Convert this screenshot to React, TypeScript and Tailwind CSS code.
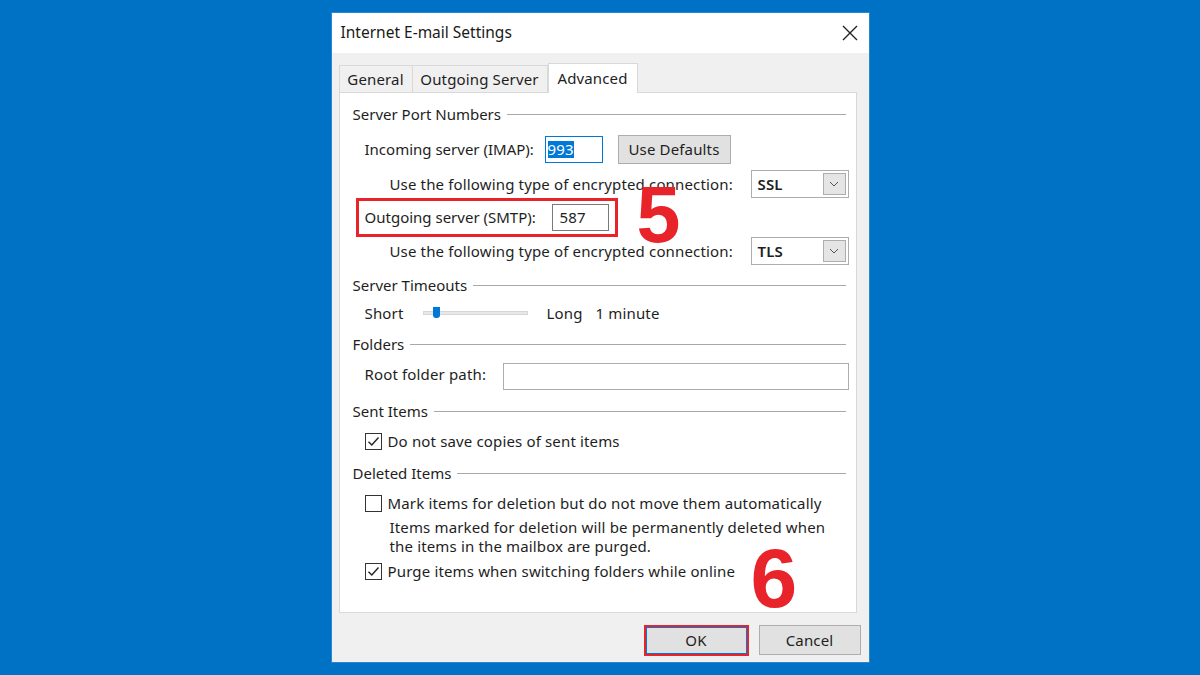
import React from "react";

const font = { fontFamily: '"Noto Sans", "Open Sans", sans-serif' };
const bigFont = { fontFamily: '"Liberation Sans", Arial, sans-serif' };

function GroupHeader({ title, mt }: { title: string; mt: string }) {
  return (
    <div className={`flex h-[20px] items-center gap-[6px] pl-[13px] pr-[10px] tracking-normal ${mt}`}>
      <span className="whitespace-nowrap">{title}</span>
      <div className="h-px flex-1 bg-[#a8a8a8]" />
    </div>
  );
}

function Checkbox({ checked }: { checked: boolean }) {
  return (
    <div className="flex h-[17px] w-[17px] shrink-0 items-center justify-center border border-[#333] bg-white">
      {checked && (
        <svg width="13" height="13" viewBox="0 0 13 13" fill="none">
          <path d="M1.5 6.8 L4.8 10 L11.5 2.5" stroke="#222" strokeWidth="1.4" />
        </svg>
      )}
    </div>
  );
}

function Select({ value }: { value: string }) {
  return (
    <div className="flex h-[28px] w-[98px] items-center justify-between border border-[#adadad] bg-white pl-[6px] pr-[2px]">
      <span className="font-semibold">{value}</span>
      <div className="flex h-[22px] w-[23px] items-center justify-center border border-[#adadad] bg-[#e5e5e5]">
        <svg width="10" height="6" viewBox="0 0 10 6" fill="none">
          <path d="M1 1 L5 5 L9 1" stroke="#555" strokeWidth="1" />
        </svg>
      </div>
    </div>
  );
}

export default function App() {
  return (
    <div className="flex h-[675px] w-[1200px] justify-center bg-[#0072c6] pt-[12px]" style={font}>
      <div className="relative flex h-[651px] w-[539px] flex-col border border-[#2a86d4] bg-[#f0f0f0] text-[15px] tracking-[0.15px] text-[#1e1e1e]">
        <div className="flex h-[40px] items-center justify-between bg-white pl-[9px] pr-[10px]">
          <span className="text-[15.5px] tracking-normal text-[#1a1a1a]">Internet E-mail Settings</span>
          <svg width="18" height="18" viewBox="0 0 18 18" fill="none">
            <path d="M2 2 L16 16 M16 2 L2 16" stroke="#222" strokeWidth="1.4" />
          </svg>
        </div>

        <div className="flex flex-col px-[7px]">
          <div className="mt-[10px] flex h-[29px] items-end">
            <div className="flex h-[27px] w-[74px] items-center justify-center border border-b-0 border-[#d9d9d9] bg-[#f0f0f0]">
              General
            </div>
            <div className="flex h-[27px] w-[135px] items-center justify-center border border-b-0 border-l-0 border-[#d9d9d9] bg-[#f0f0f0]">
              Outgoing Server
            </div>
            <div className="relative z-10 -mb-px flex h-[30px] w-[90px] items-start justify-center border border-b-0 border-[#d9d9d9] bg-white pt-[3px]">
              Advanced
            </div>
          </div>

          <div className="flex h-[521px] w-[518px] flex-col border border-[#d9d9d9] bg-white">
            <GroupHeader title="Server Port Numbers" mt="mt-[11px]" />

            <div className="mt-[10px] flex h-[30px] items-center pl-[25px]">
              <span className="w-[180px] tracking-normal">Incoming server (IMAP):</span>
              <div className="flex h-[27px] w-[58px] items-center border border-[#0078d7] bg-white px-[2px]">
                <span className="bg-[#0078d7] leading-[17px] text-white">993</span>
              </div>
              <div className="ml-[15px] flex h-[29px] w-[113px] items-center justify-center border border-[#adadad] bg-[#e1e1e1]">
                Use Defaults
              </div>
            </div>

            <div className="mt-[6px] flex h-[28px] items-center justify-between pl-[50px] pr-[7px]">
              <span>Use the following type of encrypted connection:</span>
              <Select value="SSL" />
            </div>

            <div className="ml-[16px] flex h-[39px] w-[262px] items-center border-[3px] border-[#e8242a] pl-[6px]">
              <span className="w-[187px] tracking-normal">Outgoing server (SMTP):</span>
              <div className="flex h-[27px] w-[57px] items-center border border-[#7a7a7a] bg-white pl-[7px]">
                587
              </div>
            </div>

            <div className="flex h-[28px] items-center justify-between pl-[50px] pr-[7px]">
              <span>Use the following type of encrypted connection:</span>
              <Select value="TLS" />
            </div>

            <GroupHeader title="Server Timeouts" mt="mt-[10px]" />

            <div className="mt-[8px] flex h-[20px] items-center pl-[25px]">
              <span className="w-[58px]">Short</span>
              <div className="relative h-[4px] w-[105px] border border-[#d6d6d6] bg-[#e7e7e7]">
                <div className="absolute left-[9px] top-[-5px] h-[11px] w-[7px] rounded-b-[3px] bg-[#0078d7]" />
              </div>
              <span className="ml-[19px]">Long</span>
              <span className="ml-[13px]">1 minute</span>
            </div>

            <GroupHeader title="Folders" mt="mt-[11px]" />

            <div className="mt-[8px] flex h-[28px] items-center pl-[25px] pr-[7px]">
              <span className="w-[138px] -translate-y-[2px]">Root folder path:</span>
              <div className="h-[27px] flex-1 border border-[#adadad] bg-white" />
            </div>

            <GroupHeader title="Sent Items" mt="mt-[11px]" />

            <div className="mt-[10px] flex h-[20px] items-center gap-[6px] pl-[25px]">
              <Checkbox checked />
              <span>Do not save copies of sent items</span>
            </div>

            <GroupHeader title="Deleted Items" mt="mt-[12px]" />

            <div className="mt-[10px] flex h-[20px] items-center gap-[6px] pl-[25px]">
              <Checkbox checked={false} />
              <span className="whitespace-nowrap">Mark items for deletion but do not move them automatically</span>
            </div>

            <div className="mt-[5px] pl-[50px] leading-[19px]">
              <div className="whitespace-nowrap">Items marked for deletion will be permanently deleted when</div>
              <div>the items in the mailbox are purged.</div>
            </div>

            <div className="mt-[5px] flex h-[20px] items-center gap-[6px] pl-[25px]">
              <Checkbox checked />
              <span>Purge items when switching folders while online</span>
            </div>
          </div>

          <div className="mt-[12px] flex justify-end gap-[10px] pr-[1px]">
            <div className="flex h-[31px] w-[105px] items-center justify-center border-[2px] border-[#e8242a] bg-[#e1e1e1]">
              <div className="flex h-full w-full items-center justify-center border border-[#0078d7]">OK</div>
            </div>
            <div className="flex h-[30px] w-[102px] items-center justify-center border border-[#adadad] bg-[#e1e1e1]">
              Cancel
            </div>
          </div>
        </div>

        <span
          className="absolute left-[305px] top-[174px] text-[79px] font-bold leading-[0.72] text-[#e8242a]"
          style={bigFont}
        >
          5
        </span>
        <span
          className="absolute left-[419px] top-[535px] text-[84px] font-bold leading-[0.72] text-[#e8242a]"
          style={bigFont}
        >
          6
        </span>
      </div>
    </div>
  );
}
